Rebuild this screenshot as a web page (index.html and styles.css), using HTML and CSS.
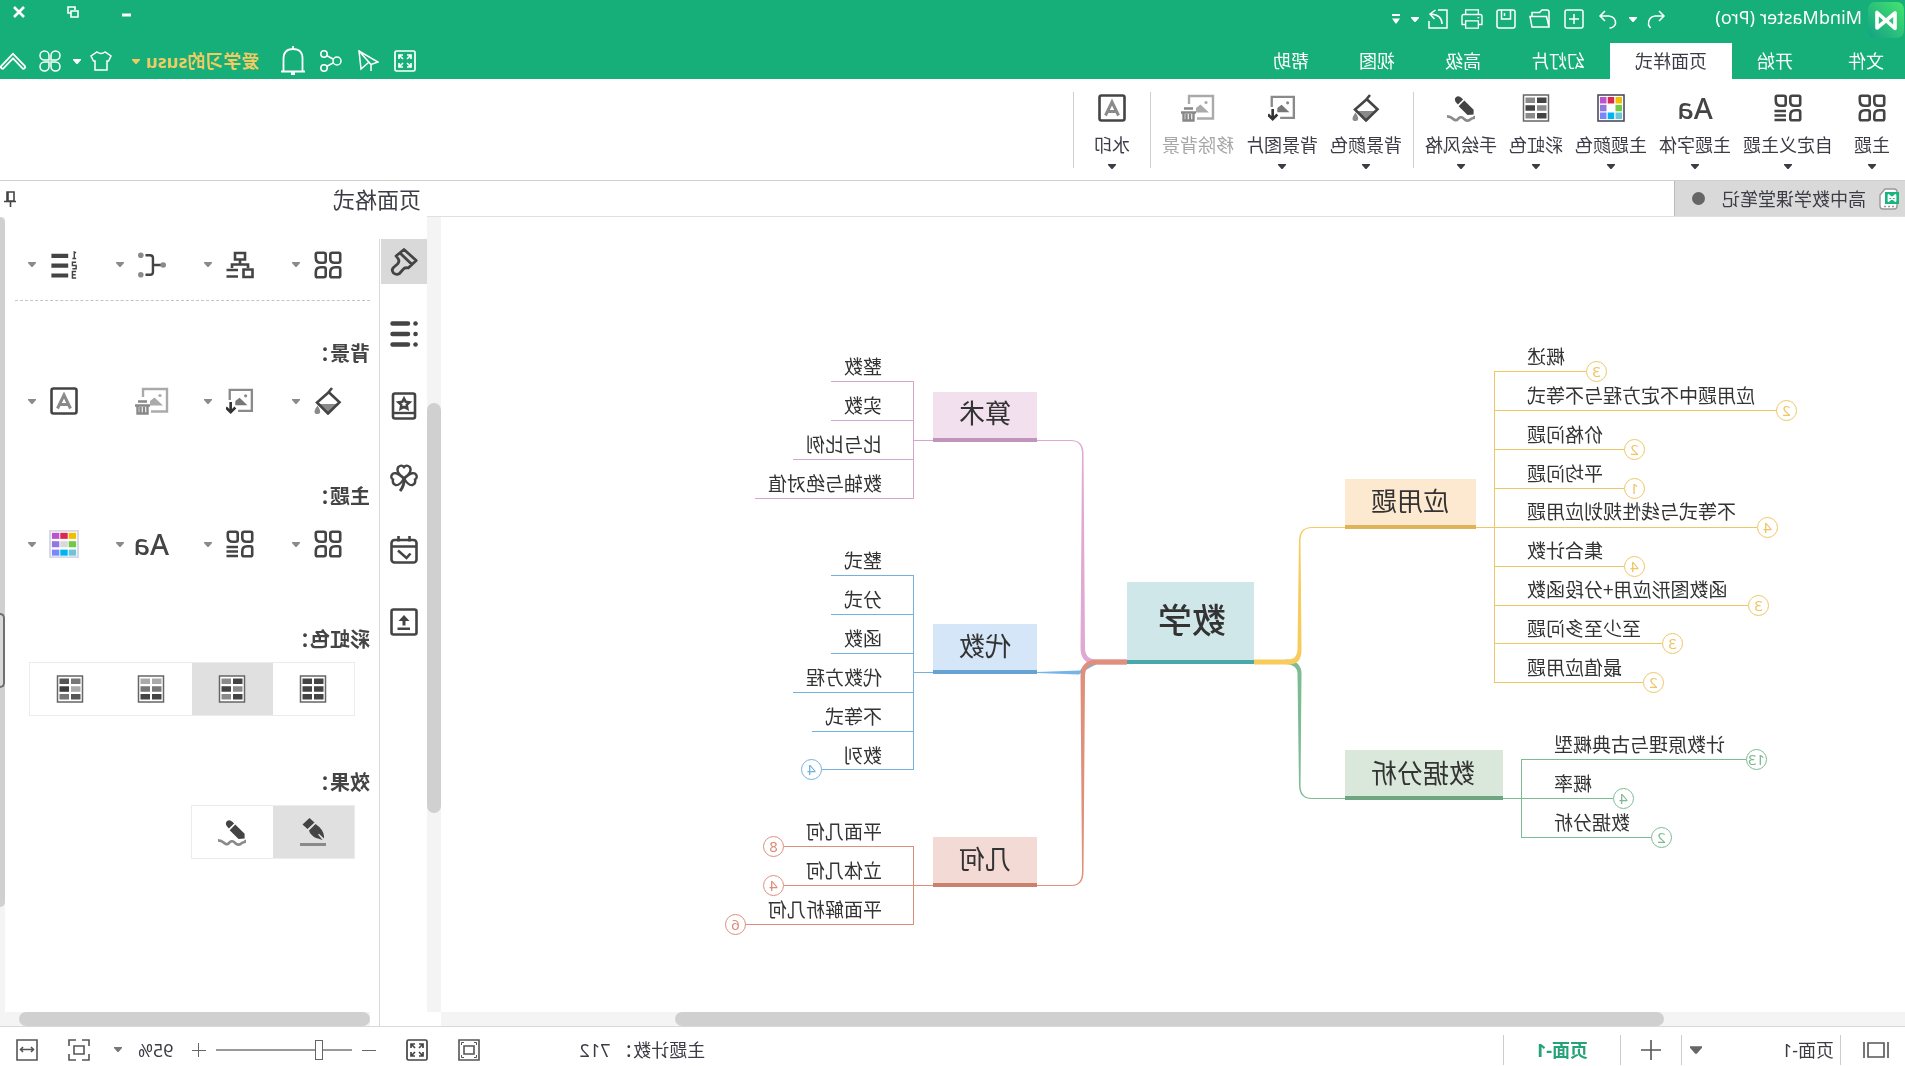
FILE: index.html
```html
<!DOCTYPE html>
<html lang="zh-CN">
<head>
<meta charset="utf-8">
<meta name="viewport" content="width=device-width, initial-scale=1">
<title>MindMaster (Pro)</title>
<link rel="stylesheet" href="styles.css">
</head>
<body>
<svg class="sprite" aria-hidden="true">
  <symbol id="caret" viewBox="0 0 8 5"><path d="M0 0h8v1L4.500 5h-1L0 1z" fill="currentColor"/></symbol>
  <symbol id="theme" viewBox="0 0 28 28"><g fill="none" stroke="currentColor" stroke-width="2.600"><path d="M3.300 1.800h6.400q2 0 2 2v3.900q0 4-4 4H3.800q-2 0-2-2V3.300q0-1.500 1.500-1.500zM18.300 1.800h6.400q1.500 0 1.500 1.500v3.400q0 5-5 5h-2.900q-2 0-2-2V3.800q0-2 2-2zM3.800 16.300h2.900q5 0 5 5v3.400q0 1.500-1.500 1.500H3.300q-1.500 0-1.500-1.500v-6.400q0-2 2-2zM18.300 16.300h2.900q5 0 5 5v3.400q0 1.500-1.500 1.500h-6.400q-2 0-2-2v-5.900q0-2 2-2z"/></g></symbol>
  <symbol id="custom" viewBox="0 0 28 28"><g fill="none" stroke="currentColor" stroke-width="2.600"><path d="M3.300 1.800h6.400q2 0 2 2v3.900q0 4-4 4H3.800q-2 0-2-2V3.300q0-1.500 1.500-1.500zM18.300 1.800h6.400q1.500 0 1.500 1.500v3.400q0 5-5 5h-2.900q-2 0-2-2V3.800q0-2 2-2zM3.800 16.300h2.900q5 0 5 5v3.400q0 1.500-1.500 1.500H3.300q-1.500 0-1.500-1.500v-6.400q0-2 2-2zM16 17h11.500M16 21.500h11.500M16 26h11.500"/></g></symbol>
  <symbol id="palette" viewBox="0 0 28 28"><path fill="#fff" stroke="#40405a" stroke-width="1.500" d="M1 1h26v26H1z"/><path fill="#f0c000" d="M3 3h6.500v6.500H3z"/><path fill="#dc2850" d="M10.800 3h6.500v6.500h-6.500z"/><path fill="#b954cc" d="M18.500 3H25v6.500h-6.500z"/><path fill="#71c944" d="M3 10.800h6.500v6.500H3z"/><path fill="#9277e0" d="M18.500 10.800H25v6.500h-6.500z"/><path fill="#6cc6d8" d="M3 18.500h6.500V25H3z"/><path fill="#00b4f0" d="M10.800 18.500h6.500V25h-6.500z"/><path fill="#7b86fa" d="M18.500 18.500H25V25h-6.500z"/></symbol>
  <symbol id="palette-lg" viewBox="0 0 32 30"><path fill="#fff" stroke="#d5d7e6" stroke-width="2" d="M1 1h30v28H1z"/><path fill="#f0c000" d="M3 3h8v6.500H3z"/><path fill="#dc2850" d="M12 3h8v6.500h-8z"/><path fill="#b954cc" d="M21 3h8v6.500h-8z"/><path fill="#71c944" d="M3 12h8v6.500H3z"/><path fill="#d9d9d9" d="M12 12h8v6.500h-8z"/><path fill="#9277e0" d="M21 12h8v6.500h-8z"/><path fill="#6cc6d8" d="M3 21h8v6.500H3z"/><path fill="#00b4f0" d="M12 21h8v6.500h-8z"/><path fill="#7b86fa" d="M21 21h8v6.500h-8z"/></symbol>
  <symbol id="rb-frame" viewBox="0 0 28 28"><path fill="#fff" stroke="#666" stroke-width="1.500" d="M1.500 1h25v26h-25z"/></symbol>
  <symbol id="rb1" viewBox="0 0 28 28"><use href="#rb-frame"/><path fill="#444" d="M3.500 3.500h9.500v5.500H3.500zM15 3.500h9.500v5.500H15zM3.500 11.300h9.500v5.500H3.500zM15 11.300h9.500v5.500H15zM3.500 19h9.500v5.500H3.500zM15 19h9.500v5.500H15z"/></symbol>
  <symbol id="rb2" viewBox="0 0 28 28"><use href="#rb-frame"/><path fill="#444" d="M3.500 3.500h9.500v5.500H3.500zM15 11.300h9.500v5.500H15zM3.500 19h9.500v5.500H3.500z"/><path fill="#8a8a8a" d="M15 3.500h9.500v5.500H15zM3.500 11.300h9.500v5.500H3.500zM15 19h9.500v5.500H15z"/></symbol>
  <symbol id="rb3" viewBox="0 0 28 28"><use href="#rb-frame"/><path fill="#aaa" d="M3.500 3.500h9.500v5.500H3.500zM15 3.500h9.500v5.500H15z"/><path fill="#777" d="M3.500 11.300h9.500v5.500H3.500zM15 11.300h9.500v5.500H15z"/><path fill="#444" d="M3.500 19h9.500v5.500H3.500zM15 19h9.500v5.500H15z"/></symbol>
  <symbol id="rb4" viewBox="0 0 28 28"><use href="#rb-frame"/><path fill="#777" d="M3.500 3.500h9.500v5.500H3.500zM15 19h9.500v5.500H15z"/><path fill="#555" d="M15 3.500h9.500v5.500H15zM3.500 19h9.500v5.500H3.500z"/><path fill="#aaa" d="M3.500 11.300h9.500v5.500H3.500z"/><path fill="#3c3c3c" d="M15 11.300h9.500v5.500H15z"/></symbol>
  <symbol id="sketch" viewBox="0 0 30 28"><path fill="#444" d="M1.500 21v-5L11.500 6l6 6L8 21.500zM12.800 5l1.500-1.600q3.500-3.500 6.200-.8 2.500 2.900-.7 6.100l-1.500 1.500z"/><path fill="none" stroke="#8a8a8a" stroke-width="2.800" d="M1 22.500q-1 2.500 1.500 2.500c3 0 2 3 6 2.500s3.500-4.500 7-3.500 2.500 3.500 5.500 3 3-4 9-4"/></symbol>
  <symbol id="pen" viewBox="0 0 28 28"><path fill="#444" d="M17.500 0l7 6.500-5 4.500-7-6.500zM11.500 6l6.500 6.500-1 2.500q-4 5-8 5.500L4.500 22l4.500-5.500-1-.8-5 4.800L3 18q1-7 8.500-12z"/><path fill="#8a8a8a" d="M1 25h26v3H1z"/></symbol>
  <symbol id="bucket" viewBox="0 0 28 28"><path fill="#8a8a8a" d="M4 17h19l-9 9zM24.500 18.500q6 8 0 8.500-5.500-.5 0-8.500z"/><path fill="none" stroke="#444" stroke-width="2.600" d="M13 5L25 15.500 14 26.500 2.500 15.300 14 4.500M10 1l5 6"/></symbol>
  <symbol id="picture" viewBox="0 0 30 28"><path fill="none" stroke="#8a8a8a" stroke-width="2.500" d="M26 13V2H2.300v22.500H17"/><circle cx="9" cy="8.500" r="1.700" fill="#8a8a8a"/><path fill="#777" d="M7 18.500l8.500-8L20 14v4.500z"/><path fill="none" stroke="#333" stroke-width="2.800" d="M25 15v10.500M20 21l5 5 5-5"/></symbol>
  <symbol id="no-picture" viewBox="0 0 34 28"><path fill="none" stroke="#aaa" stroke-width="2.400" d="M26 10V2H2v22.500h16"/><circle cx="9" cy="8.500" r="1.600" fill="#aaa"/><path fill="#aaa" d="M6 18.500l8.500-8L19 14v4.500z"/><path fill="none" stroke="#888" stroke-width="2.400" d="M22 14.500h9M19 18.500h15M21.500 18v8.500h10V18M25 20v6M28.500 20v6"/></symbol>
  <symbol id="watermark" viewBox="0 0 28 28"><rect x="1.500" y="1.500" width="25" height="25" rx="2" fill="none" stroke="#444" stroke-width="2.600"/><path fill="none" stroke="#8a8a8a" stroke-width="3" d="M7.500 21.500L14 8l6.500 13.500M10 17.500h8"/></symbol>
  <symbol id="layout" viewBox="0 0 28 28"><path fill="none" stroke="currentColor" stroke-width="2.600" d="M9 2h10v6.500H9zM14 8.500v4M6 17v-3.500h16V17M1.500 18.500h9v7.500h-9zM16 19h11.500M16 25.500h11.500"/></symbol>
  <symbol id="connector" viewBox="0 0 30 28"><path fill="none" stroke="currentColor" stroke-width="2.600" d="M5 14h9M22 3.500h-5q-3 0-3 3v15q0 3 3 3h5"/><g fill="#8a8a8a"><circle cx="3" cy="14" r="3"/><circle cx="27" cy="3.500" r="3"/><circle cx="27" cy="24.500" r="3"/></g></symbol>
  <symbol id="numbering" viewBox="0 0 28 30"><path fill="currentColor" d="M9.500 3h18v4.500h-18zM9.500 13.500h18V18h-18zM9.500 24h18v4.500h-18z"/><path fill="none" stroke="currentColor" stroke-width="1.500" d="M1 2l2-1v7M1 8h4M1 12h4v3.500H1V19h4M1 22h4v7H1M1.500 25.500H5"/></symbol>
  <symbol id="brush" viewBox="0 0 28 28"><path fill="none" stroke="currentColor" stroke-width="2.800" stroke-linejoin="round" d="M14 1.500L1.800 12.500l8 7.500q3.500-1 5.200 1.500l3.500 4q3 2 6-.5 2.500-3 0-5.500l-4-3.500q-2.500-2.500-.5-5.500l2-2.500zM18 5L6 16.500"/></symbol>
  <symbol id="outline" viewBox="0 0 28 28"><path stroke="currentColor" stroke-width="4.500" stroke-linecap="round" d="M10 3.500h15.500M10 14h15.500M10 24.500h15.500"/><g fill="currentColor"><circle cx="2.500" cy="3.500" r="2.300"/><circle cx="2.500" cy="14" r="2.300"/><circle cx="2.500" cy="24.500" r="2.300"/></g></symbol>
  <symbol id="clipart" viewBox="0 0 28 28"><rect x="3" y="1.500" width="22" height="25" rx="2" fill="none" stroke="currentColor" stroke-width="2.600"/><path stroke="currentColor" stroke-width="2.400" d="M3 21h22"/><path fill="none" stroke="currentColor" stroke-width="2.500" d="M14 6.500l1.700 3.300 3.800.5-2.800 2.600.7 3.800-3.400-1.800-3.400 1.800.7-3.800-2.800-2.600 3.800-.5z"/></symbol>
  <symbol id="clover" viewBox="0 0 28 28"><g fill="none" stroke="currentColor" stroke-width="2.400"><path d="M14 14.500C8 10 6 6 8.500 2.800q3-2.600 5.500.4 2.500-3 5.500-.4C22 6 20 10 14 14.500z"/><path d="M14 14.500C7 8 3 8 1.500 11.500q-.8 3 1.500 4-1 4 2.500 5.500 4 1 8.500-6.500z"/><path d="M14 14.500C21 8 25 8 26.500 11.500q.8 3-1.500 4 1 4-2.500 5.500-4 1-8.500-6.500z"/><path stroke-width="3" d="M14 14q-.5 8 4 13"/></g></symbol>
  <symbol id="task" viewBox="0 0 28 28"><rect x="1.500" y="4" width="25" height="22.500" rx="3" fill="none" stroke="currentColor" stroke-width="2.600"/><path fill="none" stroke="currentColor" stroke-width="2.600" d="M2 10.500h24M8.500 0v5.500M19.500 0v5.500M20 14.500l-8.500 7.500-4-4.500"/></symbol>
  <symbol id="upload" viewBox="0 0 28 28"><rect x="1.500" y="1.500" width="25" height="25" rx="2" fill="none" stroke="currentColor" stroke-width="2.600"/><path fill="currentColor" d="M14 7l5.500 6h-4v4.500h-3V13h-4zM8 19.500h12.500V22H8z"/></symbol>
  <symbol id="full" viewBox="0 0 22 22"><g fill="none" stroke="currentColor" stroke-width="1.700"><rect x="1" y="1" width="20" height="20" rx="1.500"/><path d="M9 5H5v4M5 5l4 4M13 5h4v4M17 5l-4 4M5 13v4h4M5 17l4-4M17 13v4h-4M17 17l-4-4"/></g></symbol>
</svg>

<div class="app">
  <header class="top">
    <div class="titlebar">
      <svg class="logo" viewBox="0 0 36 36"><defs><linearGradient id="lg" x1="1" y1="1" x2="0" y2="0"><stop offset="0" stop-color="#12a184"/><stop offset=".5" stop-color="#2cc27a"/><stop offset="1" stop-color="#45e56d"/></linearGradient></defs><rect width="36" height="36" rx="7" fill="url(#lg)"/><path fill="none" stroke="#fff" stroke-width="3.600" stroke-linejoin="round" d="M9 11v15.500L27 10.500V26z"/></svg>
      <h1 class="title">MindMaster (Pro)</h1>
      <div class="quick">
        <button class="q" aria-label="撤销"><svg viewBox="0 0 20 20"><path d="M7 2L2 7l5 5M2 7h9q7 1 6.500 9l-2 3"/></svg></button>
        <button class="q c" aria-label="撤销列表"><svg class="caret"><use href="#caret"/></svg></button>
        <button class="q" aria-label="恢复"><svg viewBox="0 0 20 20"><path d="M13 2l5 5-5 5M18 7H9Q2 8 2.500 15q2 4 6 4"/></svg></button>
        <button class="q" aria-label="新建"><svg viewBox="0 0 20 20"><rect x="1" y="1" width="18" height="18" rx="2"/><path d="M10 5v10M5 10h10"/></svg></button>
        <button class="q" aria-label="打开"><svg viewBox="0 0 22 20"><path d="M2 18V3q0-2 2-2h5l2.500 2.500H19V7M2 18L4.500 7.500H21L19 18H2z"/></svg></button>
        <button class="q" aria-label="保存"><svg viewBox="0 0 20 20"><rect x="1" y="1" width="18" height="18" rx="2"/><path d="M5.500 1v9h9V1M11.500 4v3"/></svg></button>
        <button class="q" aria-label="打印"><svg viewBox="0 0 24 22"><path d="M5 6V1h14v5M5 17H1V8q0-2 2-2h18q2 0 2 2v9h-4M5 13h14v8H5zM4 9.500h2"/></svg></button>
        <button class="q" aria-label="导出"><svg viewBox="0 0 20 20"><path d="M10 1H1v18h18v-7M6 15q0-9 11-10M12.500 1L18 5l-4.500 5"/></svg></button>
        <button class="q c" aria-label="导出列表"><svg class="caret"><use href="#caret"/></svg></button>
        <button class="q c more-btn" aria-label="更多"><svg class="more" viewBox="0 0 8 10"><path d="M0 0h8v2H0zM0 4.500h8L4.500 9.500h-1z"/></svg></button>
      </div>
      <div class="window">
        <button aria-label="最小化"><svg viewBox="0 0 12 12"><path d="M2 9h9" stroke-width="3"/></svg></button>
        <button aria-label="还原"><svg viewBox="0 0 12 12"><path d="M4 4V1h7v6H8M1 5h7v6H1z" stroke-width="1.600"/></svg></button>
        <button aria-label="关闭"><svg viewBox="0 0 12 12"><path d="M1 1l10 10M11 1L1 11" stroke-width="2.600"/></svg></button>
      </div>
    </div>
    <div class="tabbar">
      <nav class="tabs">
        <button class="tab first">文件</button><button class="tab">开始</button><button class="tab active">页面样式</button><button class="tab">幻灯片</button><button class="tab">高级</button><button class="tab">视图</button><button class="tab">帮助</button>
      </nav>
      <div class="account">
        <button aria-label="全屏"><svg class="i22"><use href="#full"/></svg></button>
        <button aria-label="发送"><svg class="i22" viewBox="0 0 22 22"><path d="M20 1L1 12l7 2.500L20 1l-2 18-7.500-6.500M8 14.500V21"/></svg></button>
        <button aria-label="分享"><svg class="i22" viewBox="0 0 22 22"><circle cx="5" cy="11" r="4"/><circle cx="18" cy="4" r="3.200"/><circle cx="18" cy="18" r="3.200"/><path d="M9 9l6.500-3.500M9 13l6.500 3.500"/></svg></button>
        <button aria-label="通知"><svg class="bell" viewBox="0 0 24 30"><path d="M2.500 25V12.500q0-9.500 9.500-9.500t9.500 9.500V25M0 25.500h24M12 0v3" stroke-width="1.800"/><path d="M12 26v3" stroke-width="4"/></svg></button>
        <button class="user">爱学习的susu<svg class="caret"><use href="#caret"/></svg></button>
        <button class="shirt" aria-label="换肤"><svg class="i22" viewBox="0 0 22 20"><path d="M7 1q4 3 8 0l6 4-2.500 5H17v9H5v-9H3.500L1 5z"/></svg><svg class="caret"><use href="#caret"/></svg></button>
        <button aria-label="应用"><svg class="i22" viewBox="0 0 22 22"><path d="M10 10H5.500A4.500 4.500 0 1 1 10 5.500zM12 10V5.500a4.500 4.500 0 1 1 4.500 4.500zM10 12v4.500A4.500 4.500 0 1 1 5.500 12zM12 12h4.500a4.500 4.500 0 1 1-4.500 4.500z"/></svg></button>
        <button class="folder" aria-label="收起功能区"><svg class="fold" viewBox="0 0 26 18"><path d="M2.500 15L13 4l10.500 11" stroke-width="5" stroke-linecap="round"/><path d="M2.500 15L13 4l10.500 11" stroke="#16ae79" stroke-width="1.400" stroke-linecap="round"/></svg></button>
      </div>
    </div>
  </header>

  <div class="ribbon">
    <button class="tool"><svg class="i28"><use href="#theme"/></svg><span>主题</span><svg class="caret"><use href="#caret"/></svg></button>
    <button class="tool"><svg class="i28"><use href="#custom"/></svg><span>自定义主题</span><svg class="caret"><use href="#caret"/></svg></button>
    <button class="tool"><b class="aa">Aa</b><span>主题字体</span><svg class="caret"><use href="#caret"/></svg></button>
    <button class="tool"><svg class="i28"><use href="#palette"/></svg><span>主题颜色</span><svg class="caret"><use href="#caret"/></svg></button>
    <button class="tool"><svg class="i28"><use href="#rb2"/></svg><span>彩虹色</span><svg class="caret"><use href="#caret"/></svg></button>
    <button class="tool"><svg class="i28"><use href="#sketch"/></svg><span>手绘风格</span><svg class="caret"><use href="#caret"/></svg></button>
    <i class="rule"></i>
    <button class="tool"><svg class="i28"><use href="#bucket"/></svg><span>背景颜色</span><svg class="caret"><use href="#caret"/></svg></button>
    <button class="tool"><svg class="i28"><use href="#picture"/></svg><span>背景图片</span><svg class="caret"><use href="#caret"/></svg></button>
    <button class="tool" disabled><svg class="i34"><use href="#no-picture"/></svg><span>移除背景</span></button>
    <i class="rule"></i>
    <button class="tool"><svg class="i28"><use href="#watermark"/></svg><span>水印</span><svg class="caret"><use href="#caret"/></svg></button>
    <i class="rule"></i>
  </div>

  <div class="work">
    <main class="editor">
      <div class="docs">
        <button class="doc"><svg class="docicon" viewBox="0 0 20 22"><path fill="#fff" stroke="#999" stroke-width="1.400" d="M2 4q0-3 3-3h9l5 6v11q0 3-3 3H5q-3 0-3-3z"/><path fill="#18b57d" d="M0 4h14v12H0z"/><path fill="none" stroke="#fff" stroke-width="1.800" stroke-linejoin="round" d="M3.500 7v6l7-6v6z"/><path fill="none" stroke="#999" stroke-width="1.400" stroke-dasharray="2 2" d="M5 18.500h11"/></svg>高中数学课堂笔记<i class="dot"></i></button>
      </div>
      <div class="canvas">
        <svg class="map" viewBox="0 217 1464 795" role="img" aria-label="数学思维导图">
          <path fill="#7dbb93" d="M620 659.500Q603.500 660 603.500 674L604.500 785Q604.500 798 593 798H560v1H593Q606 799 606 785L607.500 674Q607.500 664.500 620 664z"/>
          <path fill="#f7cb5c" d="M651 664.500H616Q603.500 664.500 603.500 650L604.500 541Q604.500 528 593 528H560V527H593Q606 527 606 541L607.500 648Q607.500 659.500 617 659.500H651z"/>
          <path fill="#dfa9d3" d="M778 659.500H808Q820 659.500 820 648L821.500 454Q821.500 440 834 440H868v1H834Q823 441 823 454L824.500 648Q824.500 664.500 808 664.500H778z"/>
          <path fill="#76b4e6" d="M808 660Q822 664 825 670.500L868 672v1L826 674.500Q820 670 808 664z"/>
          <path fill="#df8f7a" d="M778 659.500H808Q824.500 660 824.500 676L823 872Q823 885 834 885H868v1H834Q821.500 886 821.500 872L820 676Q820 664.500 808 664.500H778z"/>

          <path fill="#d0e7ea" d="M651 582h127v80H651z"/><path fill="#4aa9a8" d="M651 660h127v4H651z"/>
          <path fill="#fde9d0" d="M429 479h131v48H429z"/><path fill="#e0b456" d="M429 525h131v4H429z"/>
          <path fill="#d9e8da" d="M402 750h158v48H402z"/><path fill="#6ea77f" d="M402 796h158v4H402z"/>
          <path fill="#f3e0ee" d="M868 392h104v48H868z"/><path fill="#c094bb" d="M868 438h104v4H868z"/>
          <path fill="#d4e6f8" d="M868 624h104v48H868z"/><path fill="#66a3d2" d="M868 670h104v4H868z"/>
          <path fill="#f4dad4" d="M868 837h104v48H868z"/><path fill="#c9806c" d="M868 883h104v4H868z"/>

          <text class="root" x="713" y="633">数学</text>
          <g class="branch">
            <text x="495" y="511">应用题</text><text x="482" y="783">数据分析</text>
            <text x="920" y="423">算术</text><text x="920" y="656">代数</text><text x="920" y="869">几何</text>
          </g>

          <g class="yellow">
            <path d="M429 527.500H148M410.500 371v312M410.500 371.500H319M410.500 410.500H128M410.500 449.500H281M410.500 488.500H281M410.500 566.500H281M410.500 605.500H157M410.500 643.500H243M410.500 682.500H262"/>
            <circle cx="308.500" cy="371.500" r="10"/><circle cx="118.500" cy="410.500" r="10"/><circle cx="270.500" cy="449.500" r="10"/><circle cx="270.500" cy="488.500" r="10"/><circle cx="137.500" cy="527.500" r="10"/><circle cx="270.500" cy="566.500" r="10"/><circle cx="146.500" cy="605.500" r="10"/><circle cx="232.500" cy="643.500" r="10"/><circle cx="251.500" cy="682.500" r="10"/>
            <text x="308.500" y="377">3</text><text x="118.500" y="416">2</text><text x="270.500" y="455">2</text><text x="270.500" y="494">1</text><text x="137.500" y="533">4</text><text x="270.500" y="572">4</text><text x="146.500" y="611">3</text><text x="232.500" y="649">3</text><text x="251.500" y="688">2</text>
          </g>
          <g class="leaf end">
            <text x="378" y="364">概述</text><text x="378" y="403">应用题中不定方程与不等式</text><text x="378" y="442">价格问题</text><text x="378" y="481">平均问题</text><text x="378" y="519">不等式与线性规划应用题</text><text x="378" y="558">集合计数</text><text x="378" y="597">函数图形应用+分段函数</text><text x="378" y="636">至少至多问题</text><text x="378" y="675">最值应用题</text>
            <text x="351" y="752">计数原理与古典概型</text><text x="351" y="791">概率</text><text x="351" y="830">数据分析</text>
          </g>
          <g class="green">
            <path d="M402 798.500H292M383.500 759v79M383.500 759.500H159M383.500 837.500H254"/>
            <circle cx="148.500" cy="759.500" r="10"/><circle cx="281.500" cy="798.500" r="10"/><circle cx="243.500" cy="837.500" r="10"/>
            <text x="148.500" y="765">13</text><text x="281.500" y="804">4</text><text x="243.500" y="843">2</text>
          </g>
          <g class="pink"><path d="M972 440.500h19.500M991.500 381v118M991.500 381.500H1074M991.500 420.500H1074M991.500 459.500H1112M991.500 498.500H1150"/></g>
          <g class="blue">
            <path d="M972 672.500h19.500M991.500 575v195M991.500 575.500H1074M991.500 614.500H1074M991.500 653.500H1074M991.500 692.500H1112M991.500 731.500H1093M991.500 769.500H1083"/>
            <circle cx="1093.500" cy="769.500" r="10"/><text x="1093.500" y="775">4</text>
          </g>
          <g class="red">
            <path d="M972 885.500H1121M991.500 846v79M991.500 846.500H1121M991.500 924.500H1159"/>
            <circle cx="1131.500" cy="846.500" r="10"/><circle cx="1131.500" cy="885.500" r="10"/><circle cx="1169.500" cy="924.500" r="10"/>
            <text x="1131.500" y="852">8</text><text x="1131.500" y="891">4</text><text x="1169.500" y="930">6</text>
          </g>
          <g class="leaf">
            <text x="1023" y="374">整数</text><text x="1023" y="413">实数</text><text x="1023" y="452">比与比例</text><text x="1023" y="491">数轴与绝对值</text>
            <text x="1023" y="568">整式</text><text x="1023" y="607">分式</text><text x="1023" y="646">函数</text><text x="1023" y="685">代数方程</text><text x="1023" y="724">不等式</text><text x="1023" y="763">数列</text>
            <text x="1023" y="839">平面几何</text><text x="1023" y="878">立体几何</text><text x="1023" y="917">平面解析几何</text>
          </g>
        </svg>
        <div class="vbar"><i></i></div>
        <div class="hbar"><i></i></div>
      </div>
    </main>

    <aside class="side">
      <div class="sidehead"><h2>页面格式</h2><button aria-label="固定"><svg viewBox="0 0 12 16"><path d="M2 1h7v9H2zM8 1v9M0 10.500h12M5.500 11v5"/></svg></button></div>
      <div class="sidebody">
        <nav class="rail">
          <button class="on" aria-label="页面格式"><svg class="i28"><use href="#brush"/></svg></button>
          <button aria-label="大纲"><svg class="i28"><use href="#outline"/></svg></button>
          <button aria-label="剪贴画"><svg class="i28"><use href="#clipart"/></svg></button>
          <button aria-label="图标"><svg class="i28"><use href="#clover"/></svg></button>
          <button aria-label="任务"><svg class="i28"><use href="#task"/></svg></button>
          <button aria-label="导出"><svg class="i28"><use href="#upload"/></svg></button>
        </nav>
        <div class="panel">
          <div class="scroll">
            <div class="row first">
              <button aria-label="主题"><svg class="i28"><use href="#theme"/></svg><svg class="caret"><use href="#caret"/></svg></button>
              <button aria-label="布局"><svg class="i28"><use href="#layout"/></svg><svg class="caret"><use href="#caret"/></svg></button>
              <button aria-label="连接线"><svg class="i28"><use href="#connector"/></svg><svg class="caret"><use href="#caret"/></svg></button>
              <button aria-label="编号"><svg class="i28"><use href="#numbering"/></svg><svg class="caret"><use href="#caret"/></svg></button>
            </div>
            <section>
              <h3>背景：</h3>
              <div class="row">
                <button aria-label="背景颜色"><svg class="i28"><use href="#bucket"/></svg><svg class="caret"><use href="#caret"/></svg></button>
                <button aria-label="背景图片"><svg class="i28"><use href="#picture"/></svg><svg class="caret"><use href="#caret"/></svg></button>
                <button aria-label="移除背景" disabled><svg class="i34"><use href="#no-picture"/></svg></button>
                <button aria-label="水印"><svg class="i28"><use href="#watermark"/></svg><svg class="caret"><use href="#caret"/></svg></button>
              </div>
            </section>
            <section>
              <h3>主题：</h3>
              <div class="row">
                <button aria-label="主题"><svg class="i28"><use href="#theme"/></svg><svg class="caret"><use href="#caret"/></svg></button>
                <button aria-label="自定义主题"><svg class="i28"><use href="#custom"/></svg><svg class="caret"><use href="#caret"/></svg></button>
                <button aria-label="主题字体"><b class="aa">Aa</b><svg class="caret"><use href="#caret"/></svg></button>
                <button aria-label="主题颜色"><svg class="i34"><use href="#palette-lg"/></svg><svg class="caret"><use href="#caret"/></svg></button>
              </div>
            </section>
            <section>
              <h3>彩虹色：</h3>
              <div class="seg">
                <button aria-label="单色"><svg class="i28"><use href="#rb1"/></svg></button><button class="on" aria-label="多色"><svg class="i28"><use href="#rb2"/></svg></button><button aria-label="渐变"><svg class="i28"><use href="#rb3"/></svg></button><button aria-label="混合"><svg class="i28"><use href="#rb4"/></svg></button>
              </div>
            </section>
            <section>
              <h3>效果：</h3>
              <div class="seg">
                <button class="on" aria-label="标准"><svg class="i28"><use href="#pen"/></svg></button><button aria-label="手绘"><svg class="i28"><use href="#sketch"/></svg></button>
              </div>
            </section>
          </div>
          <div class="pv"><i></i></div>
          <div class="ph"><i></i></div>
          <div class="grip"></div>
        </div>
      </div>
    </aside>
  </div>

  <footer class="status">
    <button class="views" aria-label="页面列表"><svg viewBox="0 0 26 18"><path d="M1 1v16M25 1v16M5 2h16v14H5z"/></svg></button>
    <button class="page">页面-1<svg class="caret big"><use href="#caret"/></svg></button>
    <button class="add" aria-label="添加页面"><svg viewBox="0 0 20 20"><path d="M10 0v20M0 10h20"/></svg></button>
    <button class="current">页面-1</button>
    <p class="count">主题计数： 712</p>
    <button class="st" aria-label="演示"><svg class="i22" viewBox="0 0 22 22"><path d="M1 1h20v20H1zM6 7h10v8H6z"/><path stroke-width="1" d="M3.500 6V3.500H6M16 3.500h2.500V6M3.500 16v2.500H6M16 18.500h2.500V16"/></svg></button>
    <button class="st" aria-label="全屏"><svg class="i22"><use href="#full"/></svg></button>
    <div class="zoom">
      <button aria-label="缩小"><svg viewBox="0 0 14 14"><path d="M0 7.500h14"/></svg></button>
      <input type="range" min="0" max="100" value="22" aria-label="缩放">
      <button aria-label="放大"><svg viewBox="0 0 14 14"><path d="M7.500 0v14M0 7.500h14"/></svg></button>
    </div>
    <button class="pct">95%<svg class="caret"><use href="#caret"/></svg></button>
    <button class="st" aria-label="适合页面"><svg class="i22" viewBox="0 0 22 22"><path d="M1 7V1h7M14 1h7v6M1 15v6h7M14 21h7v-6M6 7h10v8H6z"/></svg></button>
    <button class="st last" aria-label="适合宽度"><svg class="i22" viewBox="0 0 22 22"><path d="M1 1h20v20H1zM4 10.500h14M7 8l-2.500 2.500L7 13M15 8l2.500 2.500L15 13"/></svg></button>
  </footer>
</div>
</body>
</html>
```
FILE: styles.css
```css
* { box-sizing: border-box; }
body {
  margin: 0;
  font: 18px/24px "Noto Sans", "Noto Sans CJK SC", sans-serif;
  color: #3c3c46;
  background: #fff;
  overflow: hidden;
}
button {
  margin: 0; padding: 0; border: 0; background: none;
  font: inherit; color: inherit; white-space: nowrap;
  display: flex; align-items: center; justify-content: center;
}
h1, h2, h3, p { margin: 0; font-weight: 400; }
svg { display: block; flex: none; }
.sprite { position: absolute; width: 0; height: 0; }
.caret { width: 8px; height: 5px; }
.i22 { width: 22px; height: 22px; }
.i28 { width: 28px; height: 28px; }
.i34 { width: 34px; height: 28px; }
.aa { font: 500 29px/28px "Noto Sans", sans-serif; height: 28px; color: #444; }

/* the whole window is shown flipped left to right */
.app {
  display: flex; flex-direction: column;
  height: 100vh; transform: scaleX(-1);
}

/* title and tabs */
.top { background: #16ae79; color: #fff; flex: none; }
.top svg { fill: none; stroke: #fff; stroke-width: 1.5px; }
.top .caret, .top .more { fill: #fff; stroke: none; }
.titlebar { display: flex; height: 43px; padding-left: 1px; }
.top .logo { width: 36px; height: 36px; margin-top: 2px; stroke: none; }
.title { font-size: 18px; line-height: 34px; margin-left: 6px; }
.quick { display: flex; align-items: center; height: 38px; margin-left: 42px; }
.q { width: 34px; }
.q svg:not(.caret):not(.more) { width: 22px; height: 20px; }
.q.c { width: 16px; margin-left: -2px; }
.q.more-btn { margin-left: 3px; }
.top .more { width: 8px; height: 10px; }
.window { display: flex; margin-left: auto; height: 24px; gap: 42px; padding-right: 13px; }
.window svg { width: 12px; height: 12px; }
.tabbar { display: flex; height: 36px; justify-content: space-between; }
.tabs { display: flex; }
.tab { padding: 0 25px; height: 36px; }
.tab.first { padding: 0 30px 0 21px; }
.tab.active { background: #fff; color: #3c3c46; }
.account { display: flex; align-items: center; gap: 15px; }
.top .bell { width: 24px; height: 30px; }
.user { color: #f0cc62; font-weight: 700; gap: 6px; margin-left: 7px; }
.shirt { gap: 9px; margin: 0 -3px 0 5px; }
.folder { margin-left: -2px; }
.top .fold { width: 26px; height: 18px; }

/* ribbon */
.ribbon { display: flex; flex: none; height: 102px; padding-top: 15px; border-bottom: 1px solid #d0d0d0; }
.tool { flex-direction: column; justify-content: flex-start; min-width: 66px; padding: 0 6px; height: 76px; }
.tool span { margin: 11px 0 7px; }
.tool .i28, .tool .i34, .tool .aa { color: #444; }
.tool:disabled { color: #a6a6a6; }
.rule { width: 1px; height: 76px; margin: -2px 5px 0; background: #d0d0d0; }

/* editor */
.work { display: flex; flex: 1; min-height: 0; }
.editor { flex: 1; display: flex; flex-direction: column; min-width: 0; }
.docs { height: 36px; border-bottom: 1px solid #e0e0e0; flex: none; }
.doc { height: 35px; padding: 0 17px 0 6px; background: #d9d9d9; border-right: 1px solid #bbb; }
.docicon { width: 20px; height: 22px; margin-right: 13px; }
.dot { width: 13px; height: 13px; border-radius: 50%; background: #666; margin-left: 17px; }
.canvas { flex: 1; min-height: 0; display: grid; grid-template: 1fr 14px / 1fr 14px; }
.map { width: 1464px; height: 795px; max-width: 100%; }
.vbar, .hbar, .pv, .ph { background: #f4f4f4; display: flex; }
.vbar i, .hbar i, .pv i, .ph i { background: #d0d0d0; border-radius: 7px; }
.vbar i { width: 14px; height: 410px; margin-top: 186px; }
.hbar i { width: 989px; height: 14px; margin-left: 241px; }

.map text { font-family: "Noto Sans CJK SC", sans-serif; fill: #333; }
.map .root { font-size: 34px; font-weight: 500; text-anchor: middle; }
.map .branch { font-size: 26px; text-anchor: middle; }
.map .leaf { font-size: 19px; }
.map .end { text-anchor: end; }
.yellow, .green, .pink, .blue, .red { fill: none; stroke: currentColor; }
.yellow { color: #edc665; }
.green { color: #7dbb93; }
.pink { color: #d5a5cc; }
.blue { color: #74b1dd; }
.red { color: #dd8e7b; }
.yellow text, .green text, .blue text, .red text {
  fill: currentColor; stroke: none; text-anchor: middle;
  font: 15px "Noto Sans", sans-serif;
}

/* side panel */
.side { flex: 0 0 427px; display: flex; flex-direction: column; }
.sidehead { display: flex; justify-content: space-between; height: 36px; padding: 0 4px 0 6px; }
.sidehead h2 { font-size: 22px; line-height: 36px; }
.sidehead svg { width: 12px; height: 16px; fill: none; stroke: #444; stroke-width: 1.6px; }
.sidebody { display: flex; flex: 1; min-height: 0; }
.rail { width: 48px; margin-top: 22px; display: flex; flex-direction: column; gap: 27px; border-right: 1px solid #d9d9d9; color: #444; }
.rail button { width: 46px; height: 45px; }
.rail .on { background: #d9d9d9; }
.panel { flex: 1; min-width: 0; display: grid; grid-template: 1fr 14px / 1fr 5px; position: relative; color: #444; }
.scroll { padding: 0 10px 0 9px; overflow: hidden; }
.row { display: grid; grid-template-columns: repeat(4, 88px); padding-left: 28px; height: 34px; }
.row.first { height: 84px; padding-top: 12px; border-bottom: 1px dashed #c4c4c4; }
.row button { justify-content: flex-start; width: 64px; }
.row .caret { margin-left: auto; margin-right: 14px; color: #8a8a8a; }
.row .i34, .row .aa { margin-left: -3px; }
.scroll h3 { font-weight: 700; font-size: 20px; line-height: 28px; margin-bottom: 16px; }
section { height: 143px; }
.row.first + section { margin-top: 39px; }
.seg { display: inline-flex; margin: -8px 0 0 15px; border: 1px solid #ececec; }
.seg button { width: 81px; height: 52px; }
.seg .on { background: #e0e0e0; }
.pv i { width: 5px; height: 690px; border-radius: 7px 0 0 7px; }
.ph { grid-column: 1 / 3; margin-left: 9px; }
.ph i { width: 351px; height: 14px; }
.grip { position: absolute; right: 0; top: 396px; width: 5px; height: 75px; border: 2px solid #707070; border-right: 0; border-radius: 7px 0 0 7px; background: #d9d9d9; }

/* status bar */
.status { display: flex; align-items: center; flex: none; height: 40px; border-top: 1px solid #d9d9d9; padding: 6px 16px 0 0; }
.status > button svg:not(.caret) { fill: none; stroke: #555; stroke-width: 1.6px; }
.zoom svg { fill: none; stroke: #666; stroke-width: 1px; }
.status button { height: 30px; }
.views { width: 65px; border-right: 1px solid #ccc; padding-right: 6px; }
.views svg { width: 26px; height: 18px; }
.page { width: 159px; justify-content: space-between; padding: 0 8px 0 6px; border-right: 1px solid #ccc; }
.page .big { width: 12px; height: 8px; color: #666; }
.add { width: 61px; border-right: 1px solid #ccc; }
.add svg { width: 20px; height: 20px; }
.current { width: 117px; border-right: 1px solid #ccc; color: #25a277; font-weight: 700; }
.count { margin-left: auto; margin-right: 100px; }
.st { margin-right: 30px; color: #444; }
.zoom { display: flex; align-items: center; gap: 10px; }
.zoom svg { width: 14px; height: 14px; }
.zoom input { appearance: none; width: 136px; height: 20px; margin: 0; background: linear-gradient(#999, #999) center / 100% 2px no-repeat; }
.zoom input::-webkit-slider-thumb { appearance: none; width: 8px; height: 20px; background: #fff; border: 1px solid #666; }
.pct { margin: 0 24px 0 18px; gap: 16px; }
.pct .caret { color: #777; }
.st.last { margin-right: 0; }
```
